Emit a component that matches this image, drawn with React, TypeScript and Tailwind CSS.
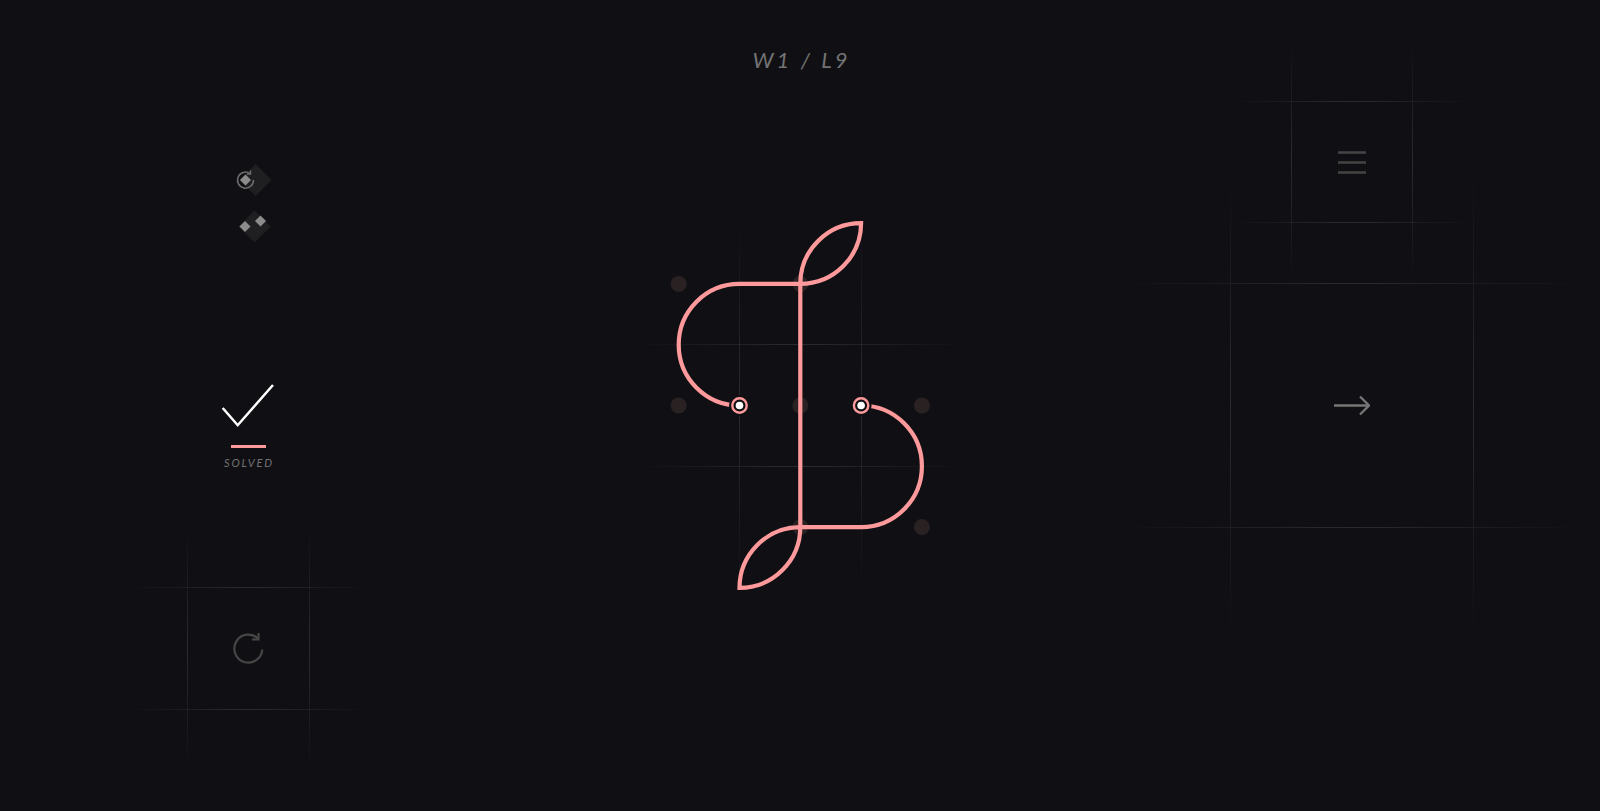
const hashSizes = {
  small: { top: "-inset-x-[61px]", side: "-inset-y-[61px]" },
  board: { top: "-inset-x-[105px]", side: "-inset-y-[122px]" },
  large: { top: "-inset-x-[112px]", side: "-inset-y-[112px]" },
};

// the four fading lines that frame a cell
function Hash({ size, className, children }: { size: keyof typeof hashSizes; className: string; children?: React.ReactNode }) {
  const s = hashSizes[size];
  const horizontal = "absolute h-px bg-linear-to-r from-transparent via-[#2c2c2e] to-transparent";
  const vertical = "absolute w-px bg-linear-to-b from-transparent via-[#2c2c2e] to-transparent";
  return (
    <div className={`relative flex items-center justify-center ${className}`}>
      <div className={`${horizontal} top-0 ${s.top}`} />
      <div className={`${horizontal} bottom-0 ${s.top}`} />
      <div className={`${vertical} left-0 ${s.side}`} />
      <div className={`${vertical} right-0 ${s.side}`} />
      {children}
    </div>
  );
}

function RestartHint() {
  return (
    <svg width="48" height="40" viewBox="0 0 48 40">
      <path d="M31.5 4 L47.5 20 L31.5 36 L15.5 20 Z" fill="#1f1f21" />
      <path d="M21.5 14.5 L27 20 L21.5 25.5 L16 20 Z" fill="#8c8c8c" />
      <path d="M26 13.5 A8 8 0 1 0 29.5 20" fill="none" stroke="#6d6d6d" strokeWidth="1.5" />
      <path d="M26.5 10.5 V14 H23" fill="none" stroke="#6d6d6d" strokeWidth="1.5" />
    </svg>
  );
}

function MoveHint() {
  return (
    <svg width="48" height="40" viewBox="0 0 48 40">
      <path d="M30.5 4.5 L46.5 20.5 L30.5 36.5 L14.5 20.5 Z" fill="#1f1f21" />
      <path d="M21 15 L26.5 20.5 L21 26 L15.5 20.5 Z" fill="#8c8c8c" />
      <path d="M36.5 9.5 L42 15 L36.5 20.5 L31 15 Z" fill="#8c8c8c" />
    </svg>
  );
}

function Board() {
  return (
    <div className="relative w-[402px] h-[402px] mt-[130px]">
      <Hash size="board" className="absolute left-[140px] top-[140px] w-[123px] h-[123px]" />
      <svg className="absolute inset-0" width="402" height="402" viewBox="-201.3 -201.5 402 402">
        <g fill="#2a2122">
          <circle cx="-121.6" cy="-121.6" r="8" />
          <circle cx="-121.6" cy="0" r="8" />
          <circle cx="0" cy="-121.6" r="8" />
          <circle cx="0" cy="0" r="8" />
          <circle cx="0" cy="121.6" r="8" />
          <circle cx="121.6" cy="0" r="8" />
          <circle cx="121.6" cy="121.6" r="8" />
        </g>
        <g fill="none" stroke="#ff9a9c" strokeWidth="4.2">
          <path d="M-60.8 0 A60.8 60.8 0 0 1 -121.6 -60.8 A60.8 60.8 0 0 1 -60.8 -121.6 H0 V121.6 H60.8 A60.8 60.8 0 0 0 121.6 60.8 A60.8 60.8 0 0 0 60.8 0" />
          <path d="M0 -121.6 A60.8 60.8 0 0 1 60.8 -182.4 A60.8 60.8 0 0 1 0 -121.6 Z" />
          <path d="M0 121.6 A60.8 60.8 0 0 0 -60.8 182.4 A60.8 60.8 0 0 0 0 121.6 Z" />
        </g>
        {[-60.8, 60.8].map((x) => (
          <g key={x}>
            <circle cx={x} cy="0" r="10.5" fill="#101014" />
            <circle cx={x} cy="0" r="7.2" fill="#101014" stroke="#ff9a9c" strokeWidth="2.4" />
            <circle cx={x} cy="0" r="3.8" fill="#ffffff" />
          </g>
        ))}
      </svg>
    </div>
  );
}

export default function App() {
  return (
    <div className="w-[1600px] h-[811px] overflow-hidden bg-[#101014] flex font-['Lato',sans-serif]">
      {/* Left column */}
      <div className="w-[496px] flex flex-col pt-[39px]">
        <div className="h-[244px] flex flex-col items-center gap-[6px] pt-[121px]">
          <RestartHint />
          <MoveHint />
        </div>
        <div className="h-[244px] flex flex-col items-center pt-[99px]">
          <svg width="56" height="48" viewBox="0 0 56 48">
            <path d="M2.7 26 L17.7 43.2 L53 3" fill="none" stroke="#ffffff" strokeWidth="2.5" />
          </svg>
          <div className="w-[35px] h-[3px] mt-[15px] bg-[#ff9a9c]" />
          <div className="mt-[8px] pl-[2px] text-[11px] leading-[14px] italic tracking-[0.17em] text-[#727272]">SOLVED</div>
        </div>
        <div className="h-[244px] pt-[60px] pl-[187px]">
          <Hash size="small" className="w-[123px] h-[123px]">
            <svg width="33" height="33" viewBox="0 0 33 33">
              <path d="M26.5 7 A14 14 0 1 0 30.3 17.5" fill="none" stroke="#464646" strokeWidth="2.2" />
              <path d="M26.5 1 V7.5 H20" fill="none" stroke="#464646" strokeWidth="2.2" />
            </svg>
          </Hash>
        </div>
      </div>

      {/* Puzzle */}
      <div className="w-[608px] flex flex-col items-center pt-[46px]">
        <div className="h-[28px] pl-[3px] text-[22px] leading-[28px] italic tracking-[0.14em] text-[#737373]">W1 / L9</div>
        <Board />
      </div>

      {/* Right column */}
      <div className="w-[496px] flex flex-col pt-[39px]">
        <div className="h-[244px] flex justify-center pt-[62px]">
          <Hash size="small" className="w-[122px] h-[122px]">
            <svg width="28" height="23" viewBox="0 0 28 23">
              <path d="M0 1.5 H28 M0 11.5 H28 M0 21.5 H28" fill="none" stroke="#444444" strokeWidth="2.4" />
            </svg>
          </Hash>
        </div>
        <div className="h-[244px] flex justify-center">
          <Hash size="large" className="w-[244px] h-[245px] shrink-0">
            <svg width="36" height="21" viewBox="0 0 36 21">
              <path d="M0 10.5 H35 M26 1.5 L35 10.5 L26 19.5" fill="none" stroke="#757575" strokeWidth="2.4" />
            </svg>
          </Hash>
        </div>
      </div>
    </div>
  );
}
